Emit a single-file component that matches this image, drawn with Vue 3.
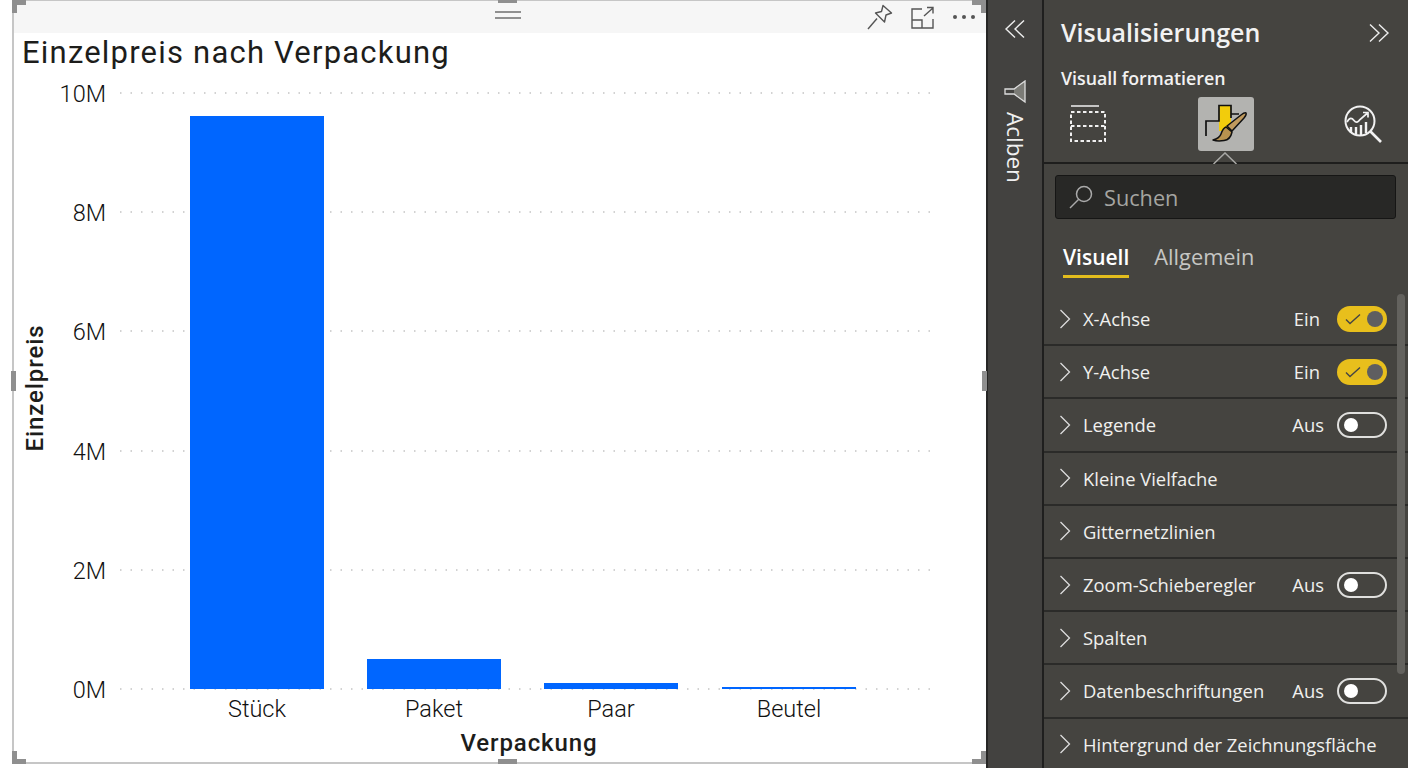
<script setup>
// Y axis ticks and bars of the chart, in svg coordinates
const ticks = [
  { label: '10M', y: 93 },
  { label: '8M', y: 212 },
  { label: '6M', y: 331 },
  { label: '4M', y: 451 },
  { label: '2M', y: 570 },
  { label: '0M', y: 689 },
];

const bars = [
  { label: 'Stück', x: 177, top: 116 },
  { label: 'Paket', x: 354, top: 659 },
  { label: 'Paar', x: 531, top: 683 },
  { label: 'Beutel', x: 709, top: 687 },
];

const handles = ['tl', 'tc', 'tr', 'ml', 'mr', 'bl', 'bc', 'br'];

const rows = [
  { name: 'X-Achse', state: 'Ein' },
  { name: 'Y-Achse', state: 'Ein' },
  { name: 'Legende', state: 'Aus' },
  { name: 'Kleine Vielfache' },
  { name: 'Gitternetzlinien' },
  { name: 'Zoom-Schieberegler', state: 'Aus' },
  { name: 'Spalten' },
  { name: 'Datenbeschriftungen', state: 'Aus' },
  { name: 'Hintergrund der Zeichnungsfläche' },
];
</script>

<template>
  <div class="page">
    <div class="canvas">
      <div class="visual">
        <span v-for="h in handles" :key="h" class="handle" :class="h"></span>
        <div class="visual-head">
          <svg class="grip" width="28" height="10" viewBox="0 0 28 10">
            <path d="M1 2h26M1 8h26" stroke="#6f6f6f" stroke-width="1.4" fill="none" />
          </svg>
          <div class="visual-tools">
            <svg width="26" height="26" viewBox="0 0 26 26" fill="none" stroke="#555" stroke-width="1.4">
              <path d="M16 1.500l8.500 7.500-5.500 2-1.500 7-4.500-4.500-4.500-4.500 6-1.500z" stroke-linejoin="round" />
              <path d="M10 14.500L1 25" />
            </svg>
            <svg width="23" height="23" viewBox="0 0 23 23" fill="none" stroke="#555" stroke-width="1.4">
              <path d="M11 3H1v19h21v-9M1 14h10v8" />
              <path d="M13 10l9-8M16 1.500h6v6" />
            </svg>
            <svg width="24" height="8" viewBox="0 0 24 8" fill="#555">
              <circle cx="3" cy="4" r="2" /><circle cx="12" cy="4" r="2" /><circle cx="21" cy="4" r="2" />
            </svg>
          </div>
        </div>
        <svg class="chart" width="970" height="731" viewBox="0 0 970 731">
          <g transform="translate(-14 -33)">
            <text class="chart-title" x="22" y="63">Einzelpreis nach Verpackung</text>
            <g v-for="t in ticks" :key="t.label">
              <line x1="120" x2="938" :y1="t.y" :y2="t.y" class="grid" />
              <text class="tick" x="106" :y="t.y + 9" text-anchor="end">{{ t.label }}</text>
            </g>
            <g v-for="b in bars" :key="b.label">
              <rect :x="b.x + 13" :y="b.top" width="134" :height="689 - b.top" fill="#0066ff" />
              <text class="tick" :x="b.x + 80" y="717" text-anchor="middle">{{ b.label }}</text>
            </g>
            <text class="axis" x="529" y="751" text-anchor="middle">Verpackung</text>
            <text class="axis" transform="translate(43 388) rotate(-90)" text-anchor="middle">Einzelpreis</text>
          </g>
        </svg>
      </div>
    </div>

    <aside class="rail">
      <svg class="rail-arrows" width="22" height="20" viewBox="0 0 22 20" fill="none" stroke="#eee" stroke-width="1.400">
        <path d="M11 1.500L2 10l9 8.500M20 1.500L11 10l9 8.500" />
      </svg>
      <svg class="rail-filter" width="22" height="24" viewBox="0 0 22 24" fill="none" stroke="#ddd" stroke-width="1.300">
        <path d="M21 1L10 9V14L21 22z" fill="#7b7b76" stroke="none" />
        <path d="M21 1v21L10 14H1V9h9z" />
      </svg>
      <span class="rail-label">Aclben</span>
    </aside>

    <section class="panel">
      <header class="panel-head">
        <div class="title-row">
          <h2>Visualisierungen</h2>
          <svg width="22" height="20" viewBox="0 0 22 20" fill="none" stroke="#eee" stroke-width="1.400">
            <path d="M2 1.500L11 10l-9 8.500M11 1.500L20 10l-9 8.500" />
          </svg>
        </div>
        <div class="subtitle">Visuall formatieren</div>
        <div class="modes">
          <svg width="38" height="38" viewBox="0 0 38 38" fill="none" stroke="#f0f0f0" stroke-width="2">
            <path d="M2 1h28" stroke-width="1.500" />
            <path d="M2 7h34v29H2zM2 21h34" stroke-dasharray="3.500 2.500" />
          </svg>
          <div class="mode-active">
            <svg width="46" height="46" viewBox="0 0 46 46">
              <rect x="16" y="4" width="12" height="26" fill="#f2cc0c" />
              <path d="M28 17V4.500H16V20H3v15" fill="none" stroke="#111" stroke-width="1.700" />
              <path d="M28 13h8" fill="none" stroke="#111" stroke-width="1.500" />
              <path d="M43 12c.8 1.500-.5 3-2 5L29 30l-5-5L38 14c2-1.500 4-2.500 5-2z" fill="#c09a5e" stroke="#111" stroke-width="1.500" stroke-linejoin="round" />
              <path d="M23 26l6 5c-1 5-4 8-8 8.500-3 .5-8 .5-11-.5 4-1 7-3 8-6 1-3 2-6 5-7z" fill="#b8924f" stroke="#111" stroke-width="1.500" stroke-linejoin="round" />
            </svg>
          </div>
          <svg width="38" height="38" viewBox="0 0 38 38" fill="none" stroke="#f2f2f2" stroke-width="2">
            <circle cx="16" cy="16" r="14.500" />
            <path d="M26.500 26.500L37 37" stroke-width="2.600" />
            <path d="M3 17c3-5 5-4 7-1.500s4 2 6-1l7-6M19 7.500h5v5" stroke-width="1.700" />
            <path d="M7 22v6M12 22v7.500M17 20v10M22 17v11" stroke-width="2.400" />
          </svg>
          <svg class="caret" width="24" height="12" viewBox="0 0 24 12" fill="none" stroke="#a9a9a6" stroke-width="1.500">
            <path d="M0.500 12L12 1l11.500 11" />
          </svg>
        </div>
      </header>

      <div class="search">
        <svg width="26" height="26" viewBox="0 0 26 26" fill="none" stroke="#aaa" stroke-width="1.500">
          <circle cx="16" cy="10" r="7.500" />
          <path d="M10.500 15.500L2 24" />
        </svg>
        <span>Suchen</span>
      </div>

      <div class="tabs">
        <span class="tab active">Visuell</span>
        <span class="tab">Allgemein</span>
      </div>

      <div class="rows">
        <div v-for="r in rows" :key="r.name" class="row">
          <svg width="12" height="20" viewBox="0 0 12 20" fill="none" stroke="#ddd" stroke-width="1.300">
            <path d="M1.500 1l9 9-9 9" />
          </svg>
          <span class="row-name">{{ r.name }}</span>
          <template v-if="r.state">
            <span class="row-state" :class="{ off: r.state === 'Aus' }">{{ r.state }}</span>
            <span class="toggle" :class="r.state === 'Ein' ? 'on' : 'off'">
              <svg v-if="r.state === 'Ein'" width="16" height="12" viewBox="0 0 16 12" fill="none" stroke="#444" stroke-width="1.400">
                <path d="M1 6.500l4 4L15 1.500" />
              </svg>
              <span class="knob"></span>
            </span>
          </template>
        </div>
        <span class="scrollbar"></span>
      </div>
    </section>
  </div>
</template>

<style scoped>
.page {
  display: flex;
  width: 1408px;
  height: 768px;
  overflow: hidden;
  font-family: "Open Sans", "Noto Sans", sans-serif;
  background: #fff;
}

/* report canvas */
.canvas {
  width: 986px;
  height: 768px;
  padding-left: 12px;
  box-sizing: border-box;
  flex-shrink: 0;
}
.visual {
  position: relative;
  width: 974px;
  height: 764px;
  box-sizing: border-box;
  border: 2px solid #c6c6c6;
  border-top-width: 1px;
  border-right: none;
}
.visual-head {
  position: relative;
  height: 32px;
  background: #f6f6f6;
  display: flex;
  justify-content: flex-end;
  align-items: center;
}
.grip {
  position: absolute;
  left: 480px;
  top: 9px;
}
.visual-tools {
  display: flex;
  align-items: center;
  gap: 18px;
  padding-right: 10px;
}
.chart {
  display: block;
}
.chart-title {
  font-family: Roboto, sans-serif;
  font-size: 31px;
  fill: #1d1d1b;
  letter-spacing: 1.200px;
}
.tick {
  font-family: Roboto, sans-serif;
  font-weight: 300;
  font-size: 23.500px;
  fill: #111;
}
.axis {
  font-family: Roboto, sans-serif;
  font-weight: 500;
  font-size: 24px;
  fill: #1d1d1b;
  letter-spacing: 0.900px;
}
.grid {
  stroke: #c4c4c4;
  stroke-width: 1.500;
  stroke-dasharray: 1.500 9;
}
.handle {
  position: absolute;
  background: #8f8f8f;
  z-index: 2;
}
.tl { left: -2px; top: -1px; width: 14px; height: 5px; }
.tl::after { content: ""; position: absolute; left: 0; top: 0; width: 5px; height: 13px; background: #8f8f8f; }
.tc { left: 484px; top: -1px; width: 19px; height: 3px; }
.tr { right: 0; top: -1px; width: 14px; height: 5px; }
.tr::after { content: ""; position: absolute; right: 0; top: 0; width: 5px; height: 13px; background: #8f8f8f; }
.ml { left: -3px; top: 370px; width: 5px; height: 20px; }
.mr { right: -1px; top: 370px; width: 5px; height: 20px; }
.bl { left: -2px; bottom: -2px; width: 14px; height: 5px; }
.bl::after { content: ""; position: absolute; left: 0; bottom: 0; width: 5px; height: 13px; background: #8f8f8f; }
.bc { left: 484px; bottom: -2px; width: 19px; height: 5px; }
.br { right: 0; bottom: -2px; width: 14px; height: 5px; }
.br::after { content: ""; position: absolute; right: 0; bottom: 0; width: 5px; height: 13px; background: #8f8f8f; }

/* collapsed filter rail */
.rail {
  width: 58px;
  box-sizing: border-box;
  flex-shrink: 0;
  background: #434240;
  border-left: 2px solid #262625;
  border-right: 2px solid #1f1f1e;
  display: flex;
  flex-direction: column;
  align-items: center;
  padding-top: 19px;
}
.rail-filter {
  margin-top: 41px;
}
.rail-label {
  margin-top: 8px;
  writing-mode: vertical-rl;
  font-size: 22.500px;
  line-height: 24px;
  color: #f0f0f0;
}

/* visualisations panel */
.panel {
  position: relative;
  flex: 1;
  background: #454440;
  color: #f2f2f2;
}
.panel-head {
  height: 164px;
  box-sizing: border-box;
  border-bottom: 2px solid #1e1e1d;
  padding: 15px 18px 0 17px;
}
.title-row {
  display: flex;
  justify-content: space-between;
  align-items: center;
}
.title-row h2 {
  margin: 0;
  font-size: 25px;
  line-height: 35px;
  font-weight: 600;
}
.subtitle {
  margin-top: 16px;
  font-size: 17.800px;
  line-height: 24px;
  font-weight: 600;
}
.modes {
  position: relative;
  display: flex;
  justify-content: space-between;
  align-items: center;
  margin-top: 7px;
  padding: 0 8px;
}
.mode-active {
  width: 56px;
  height: 54px;
  background: #b3b3b0;
  border-radius: 3px;
  display: flex;
  align-items: center;
  justify-content: center;
}
.caret {
  position: absolute;
  left: 152px;
  top: 55px;
}
.search {
  margin: 11px 12px 0 11px;
  height: 44px;
  box-sizing: border-box;
  background: #282826;
  border: 1px solid #161615;
  border-radius: 3px;
  display: flex;
  align-items: center;
  gap: 10px;
  padding-left: 12px;
  font-size: 21.700px;
  color: #a5a5a1;
}
.tabs {
  display: flex;
  gap: 25px;
  margin: 20px 0 0 19px;
  height: 54px;
  font-size: 21.800px;
  line-height: 36px;
  color: #c6c6c3;
}
.tab.active {
  color: #fff;
  font-weight: 600;
  height: 39px;
  border-bottom: 3px solid #e3bd1d;
  box-sizing: border-box;
  font-size: 21px;
}
.rows {
  position: relative;
}
.row {
  height: 53.200px;
  box-sizing: border-box;
  display: flex;
  align-items: center;
  padding: 0 21px 0 15px;
  border-bottom: 2px solid #2b2b29;
  font-size: 18.400px;
  color: #f0f0ee;
}
.row-name {
  margin-left: 12px;
  flex: 1;
  white-space: nowrap;
}
.row-state {
  margin-right: 17px;
}
.row-state.off {
  margin-right: 13px;
}
.toggle {
  width: 50px;
  height: 26px;
  box-sizing: border-box;
  border-radius: 13px;
  display: flex;
  align-items: center;
  justify-content: space-between;
}
.toggle.on {
  background: #e8bf1c;
  padding: 0 4px 0 8px;
}
.toggle.on .knob {
  width: 16px;
  height: 16px;
  background: #5e5e60;
}
.toggle.off {
  border: 2px solid #e0e0de;
  padding-left: 5px;
}
.toggle.off .knob {
  width: 14px;
  height: 14px;
  background: #fff;
}
.knob {
  border-radius: 50%;
}
.scrollbar {
  position: absolute;
  right: 3px;
  top: 1px;
  width: 8px;
  height: 380px;
  border-radius: 4px;
  background: #63625e;
}
</style>

<style>
html, body {
  margin: 0;
  overflow: hidden;
}
</style>
